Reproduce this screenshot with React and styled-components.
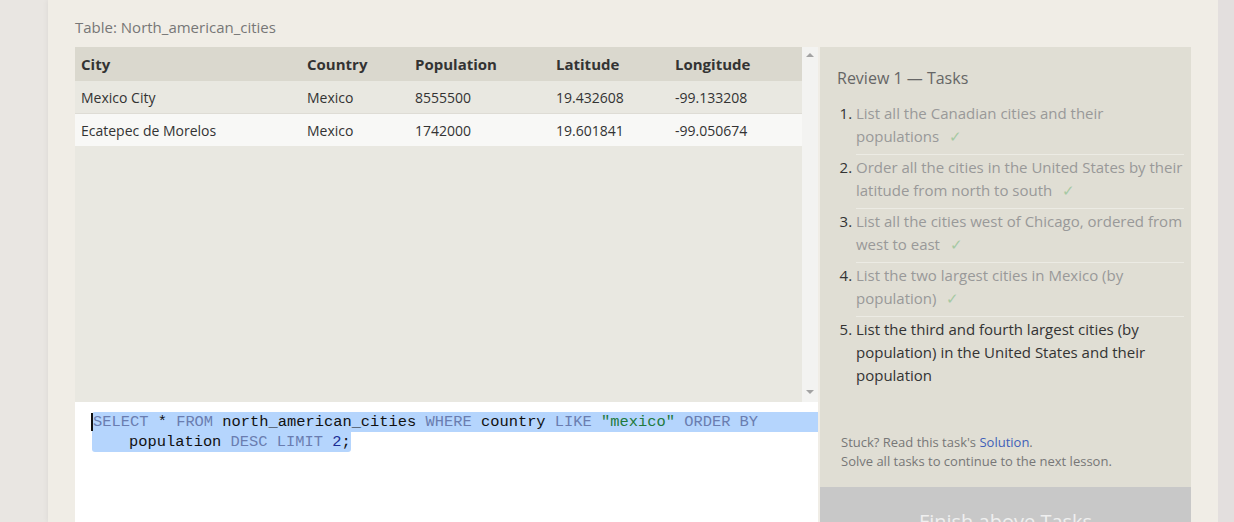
import React from 'react';
import styled, { createGlobalStyle } from 'styled-components';

const GlobalStyle = createGlobalStyle`
    html, body {
        margin: 0;
        padding: 0;
        background: #e9e6e2;
        font-family: "Open Sans", "Noto Sans", sans-serif;
    }
`;

const Page = styled.div`
    display: flex;
    height: 522px;
    overflow: hidden;
    background: #e9e6e2;
`;

const Gutter = styled.div`
    flex: 0 0 ${props => props.width}px;
    background: ${props => props.bg};
`;

const Card = styled.div`
    flex: 1;
    background: #f0ede6;
    box-shadow: 0 0 6px rgba(0, 0, 0, 0.07);
    padding: 17px 27px 0 27px;
`;

const TableTitle = styled.div`
    font-size: 15px;
    line-height: 20px;
    color: #777;
    margin-bottom: 10px;
`;

const Workspace = styled.div`
    display: flex;
    gap: 2px;
    align-items: flex-start;
`;

const LeftColumn = styled.div`
    flex: 0 0 743px;
    display: flex;
    flex-direction: column;
`;

const TableArea = styled.div`
    display: flex;
    height: 355px;
    background: #e9e8e1;
`;

const TableGrid = styled.div`
    flex: 1;
`;

const Row = styled.div`
    display: grid;
    grid-template-columns: 226px 108px 141px 119px 1fr;
    height: ${props => props.head ? 34 : 32}px;
    align-items: center;
    background: ${props => props.head ? '#dad8ce' : props.light ? '#f8f8f6' : '#e9e8e1'};
    border-top: ${props => props.light ? '1px solid #dedcd5' : 'none'};
    font-size: ${props => props.head ? 15 : 14}px;
    font-weight: ${props => props.head ? 700 : 400};
    color: #333;
`;

const Cell = styled.div`
    padding-left: 6px;
    white-space: nowrap;
`;

const Scrollbar = styled.div`
    flex: 0 0 16px;
    background: #f3f3f1;
    display: flex;
    flex-direction: column;
    justify-content: space-between;
    align-items: center;
    padding: 6px 0 8px;
`;

const Arrow = styled.div`
    width: 0;
    height: 0;
    border-left: 4px solid transparent;
    border-right: 4px solid transparent;
    ${props => props.down ? 'border-top: 4px solid #a3a3a3;' : 'border-bottom: 4px solid #a3a3a3;'}
`;

const Editor = styled.div`
    background: #fff;
    height: 150px;
    padding-top: 10px;
    padding-left: 17px;
    font-family: "Liberation Mono", "DejaVu Sans Mono", monospace;
    font-size: 15.4px;
    line-height: 20px;
    color: #111;
    white-space: pre;
`;

const CodeLine = styled.div`
    background: #b5d5fd;
    border-radius: 3px 0 0 0;
`;

const WrapLine = styled.span`
    display: inline-block;
    background: #b5d5fd;
    padding-left: 37px;
    border-radius: 0 0 3px 3px;
`;

const Cursor = styled.span`
    border-left: 2px solid #111;
    margin-left: -1px;
`;

const Tok = styled.span`
    color: ${props => ({ kw: '#6a7db0', str: '#217a3e', num: '#1c2e94' }[props.kind] || '#111')};
`;

const RightColumn = styled.div`
    flex: 0 0 371px;
    display: flex;
    flex-direction: column;
`;

const TaskPanel = styled.div`
    height: 440px;
    background: #e0ded4;
    display: flex;
    flex-direction: column;
    padding: 20px 7px 16px 17px;
    box-sizing: border-box;
`;

const PanelTitle = styled.div`
    font-size: 16px;
    line-height: 22px;
    color: #666;
    margin-bottom: 12px;
`;

const TaskList = styled.ol`
    margin: 0;
    padding: 0 0 0 19px;
    flex: 1;
`;

const Task = styled.li`
    font-size: 15px;
    line-height: 23px;
    color: #333;
    padding: 1px 0 6px;
    border-bottom: ${props => props.last ? 'none' : '1px solid #ecebe4'};
    &::marker {
        color: #333;
    }
`;

const TaskText = styled.span`
    color: ${props => props.done ? '#999' : '#333'};
`;

const Check = styled.span`
    color: #a6c9a3;
    margin-left: 10px;
`;

const Help = styled.div`
    font-size: 13px;
    line-height: 19px;
    color: #777;
    padding-left: 4px;
`;

const HelpLink = styled.a`
    color: #3f5fb8;
    text-decoration: none;
`;

const FinishButton = styled.div`
    background: #c8c8c8;
    color: #efefef;
    font-size: 20px;
    line-height: 26px;
    text-align: center;
    padding: 22px 0;
`;

const columns = ['City', 'Country', 'Population', 'Latitude', 'Longitude'];
const rows = [
    ['Mexico City', 'Mexico', '8555500', '19.432608', '-99.133208'],
    ['Ecatepec de Morelos', 'Mexico', '1742000', '19.601841', '-99.050674'],
];

const tasks = [
    { text: 'List all the Canadian cities and their populations', done: true },
    { text: 'Order all the cities in the United States by their latitude from north to south', done: true },
    { text: 'List all the cities west of Chicago, ordered from west to east', done: true },
    { text: 'List the two largest cities in Mexico (by population)', done: true },
    { text: 'List the third and fourth largest cities (by population) in the United States and their population', done: false },
];

export default function App() {
    return (
        <Page>
            <GlobalStyle />
            <Gutter width={48} bg="#e9e6e2" />
            <Card>
                <TableTitle>Table: North_american_cities</TableTitle>
                <Workspace>
                    <LeftColumn>
                        <TableArea>
                            <TableGrid>
                                <Row head>
                                    {columns.map(c => <Cell key={c}>{c}</Cell>)}
                                </Row>
                                {rows.map((r, i) => (
                                    <Row key={r[0]} light={i === 1}>
                                        {r.map((v, j) => <Cell key={j}>{v}</Cell>)}
                                    </Row>
                                ))}
                            </TableGrid>
                            <Scrollbar>
                                <Arrow />
                                <Arrow down />
                            </Scrollbar>
                        </TableArea>
                        <Editor>
                            <CodeLine>
                                <Cursor /><Tok kind="kw">SELECT</Tok> * <Tok kind="kw">FROM</Tok> north_american_cities <Tok kind="kw">WHERE</Tok> country <Tok kind="kw">LIKE</Tok> <Tok kind="str">"mexico"</Tok> <Tok kind="kw">ORDER BY</Tok>
                            </CodeLine>
                            <WrapLine>
                                population <Tok kind="kw">DESC</Tok> <Tok kind="kw">LIMIT</Tok> <Tok kind="num">2</Tok>;
                            </WrapLine>
                        </Editor>
                    </LeftColumn>
                    <RightColumn>
                        <TaskPanel>
                            <PanelTitle>Review 1 — Tasks</PanelTitle>
                            <TaskList>
                                {tasks.map((t, i) => (
                                    <Task key={i} last={i === tasks.length - 1}>
                                        <TaskText done={t.done}>{t.text}</TaskText>
                                        {t.done && <Check>✓</Check>}
                                    </Task>
                                ))}
                            </TaskList>
                            <Help>
                                Stuck? Read this task's <HelpLink href="#">Solution</HelpLink>.<br />
                                Solve all tasks to continue to the next lesson.
                            </Help>
                        </TaskPanel>
                        <FinishButton>Finish above Tasks</FinishButton>
                    </RightColumn>
                </Workspace>
            </Card>
            <Gutter width={16} bg="#e3dfde" />
        </Page>
    );
}
